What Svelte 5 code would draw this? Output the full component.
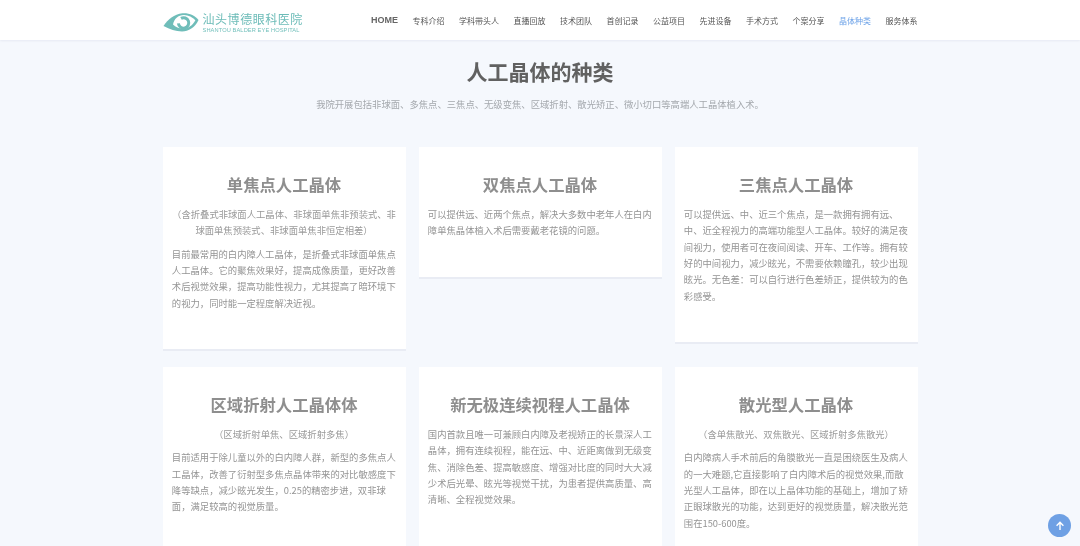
<script>
  const nav = ['HOME','专科介绍','学科带头人','直播回放','技术团队','首创记录','公益项目','先进设备','手术方式','个案分享','晶体种类','服务体系'];
  const cards = [
    { t:'单焦点人工晶体', s:'（含折叠式非球面人工晶体、非球面单焦非预装式、非球面单焦预装式、非球面单焦非恒定相差）', b:'目前最常用的白内障人工晶体，是折叠式非球面单焦点人工晶体。它的聚焦效果好，提高成像质量，更好改善术后视觉效果，提高功能性视力，尤其提高了暗环境下的视力，同时能一定程度解决近视。' },
    { t:'双焦点人工晶体', b:'可以提供远、近两个焦点，解决大多数中老年人在白内障单焦晶体植入术后需要戴老花镜的问题。' },
    { t:'三焦点人工晶体', b:'可以提供远、中、近三个焦点，是一款拥有拥有远、中、近全程视力的高端功能型人工晶体。较好的满足夜间视力，使用者可在夜间阅读、开车、工作等。拥有较好的中间视力，减少眩光，不需要依赖瞳孔，较少出现眩光。无色差：可以自行进行色差矫正，提供较为的色彩感受。' },
    { t:'区域折射人工晶体体', s:'（区域折射单焦、区域折射多焦）', b:'目前适用于除儿童以外的白内障人群，新型的多焦点人工晶体，改善了衍射型多焦点晶体带来的对比敏感度下降等缺点，减少眩光发生，0.25的精密步进，双非球面，满足较高的视觉质量。' },
    { t:'新无极连续视程人工晶体', b:'国内首款且唯一可兼顾白内障及老视矫正的长景深人工晶体，拥有连续视程，能在远、中、近距离做到无级变焦、消除色差、提高敏感度、增强对比度的同时大大减少术后光晕、眩光等视觉干扰，为患者提供高质量、高清晰、全程视觉效果。' },
    { t:'散光型人工晶体', s:'（含单焦散光、双焦散光、区域折射多焦散光）', b:'白内障病人手术前后的角膜散光一直是困绕医生及病人的一大难题,它直接影响了白内障术后的视觉效果,而散光型人工晶体，即在以上晶体功能的基础上，增加了矫正眼球散光的功能，达到更好的视觉质量，解决散光范围在150-600度。' }
  ];
</script>

<div class="page">
  <header class="head">
    <div class="bar">
      <a class="logo" href="#top">
        <svg class="eye" width="36" height="20" viewBox="0 0 36 20" aria-hidden="true">
          <path d="M0.5 14C5 7.5 11 2.2 19.5 1.3C26 .8 32 3.6 35.5 8C32 15.5 25.5 19.5 19 19.5C12.5 19.5 7 17 0.5 14Z" fill="#6fbdb9"/>
          <path d="M10 12.5C11 7 15 3 21 3C25.5 3.2 29.5 5.4 32.4 8.2C29.3 14 24.5 16.6 20 16.6C16 16.6 12.5 15 10 12.5Z" fill="#fff"/>
          <path d="M15.4 11.4A5.2 5.2 0 1 0 18 6.4" fill="none" stroke="#6fbdb9" stroke-width="3"/>
        </svg>
        <span class="logotext">
          <span class="cn">汕头博德眼科医院</span>
          <span class="en">SHANTOU BALDER EYE HOSPITAL</span>
        </span>
      </a>
      <nav class="nav">
        {#each nav as n}
          <a href="#top" class:active={n === '晶体种类'} class:home={n === 'HOME'}>{n}</a>
        {/each}
      </nav>
    </div>
  </header>

  <main class="main">
    <h1>人工晶体的种类</h1>
    <p class="lead">我院开展包括非球面、多焦点、三焦点、无级变焦、区域折射、散光矫正、微小切口等高端人工晶体植入术。</p>
    <div class="grid">
      {#each cards as c}
        <article class="card">
          <h2>{c.t}</h2>
          {#if c.s}<p class="sub">{c.s}</p>{/if}
          <p class="body">{c.b}</p>
        </article>
      {/each}
    </div>
  </main>

  <button class="top" aria-label="返回顶部">
    <svg width="10" height="10" viewBox="0 0 10 10" aria-hidden="true">
      <path d="M5 9V1.5M1.6 4.7L5 1.3L8.4 4.7" fill="none" stroke="#fff" stroke-width="1.4"/>
    </svg>
  </button>
</div>

<style>
  :global(html), :global(body) {
    margin: 0;
    height: 546px;
    overflow: hidden;
    background: #f5f8fd;
  }
  .page {
    font-family: "Noto Sans CJK SC", "Liberation Sans", sans-serif;
    color: #999;
    height: 546px;
    overflow: hidden;
    filter: blur(0.35px);
  }
  a { text-decoration: none; color: inherit; }
  .head {
    background: #fff;
    height: 40px;
    box-shadow: 0 1px 2px #e6eaf3;
  }
  .bar {
    width: 755px;
    margin: 0 auto;
    height: 100%;
    display: flex;
    align-items: center;
    justify-content: space-between;
  }
  .logo { display: flex; align-items: center; gap: 4px; padding-top: 4px; }
  .eye { display: block; }
  .logotext { display: flex; flex-direction: column; width: 100px; }
  .cn {
    font-size: 12px;
    line-height: 15px;
    letter-spacing: 0.55px;
    color: #6dbcb8;
    white-space: nowrap;
  }
  .en {
    font-family: "Liberation Sans", sans-serif;
    font-size: 5.7px;
    line-height: 7px;
    margin-top: 1px;
    letter-spacing: 0.1px;
    color: #74c0bc;
    white-space: nowrap;
  }
  .nav { display: flex; align-items: center; gap: 14.5px; font-size: 8px; color: #555; }
  .nav a { white-space: nowrap; }
  .nav .home { font-size: 9px; font-family: "Liberation Sans", sans-serif; font-weight: 700; color: #666; }
  .nav .active { color: #6ea3e8; }
  .main { width: 755px; margin: 0 auto; }
  h1 {
    margin: 17px 0 0;
    font-size: 21px;
    line-height: 28px;
    font-weight: 700;
    color: #616161;
    text-align: center;
  }
  .lead {
    margin: 11px 0 0;
    font-size: 9.33px;
    line-height: 16px;
    color: #a4a8ad;
    text-align: center;
  }
  .grid {
    margin-top: 35px;
    display: grid;
    grid-template-columns: repeat(3, 243px);
    justify-content: space-between;
    row-gap: 15.5px;
    align-items: start;
  }
  .card {
    background: #fff;
    border-bottom: 2px solid #e9ecf4;
    padding: 27px 9.33px 38.5px;
  }
  .card:nth-child(n+4) { padding-bottom: 70px; }
  h2 {
    margin: 0 0 12px;
    font-size: 16.33px;
    line-height: 20px;
    font-weight: 700;
    color: #8e8e8e;
    text-align: center;
  }
  p { margin: 0; }
  .sub, .body { font-size: 9.33px; line-height: 16.33px; }
  .sub { color: #999; text-align: center; margin-bottom: 7px; }
  .body { color: #949494; }
  .top {
    position: fixed;
    left: 1048px;
    top: 514px;
    width: 23px;
    height: 23px;
    padding: 0;
    border: 0;
    border-radius: 50%;
    background: #6ea0e4;
    display: flex;
    align-items: center;
    justify-content: center;
  }
</style>
